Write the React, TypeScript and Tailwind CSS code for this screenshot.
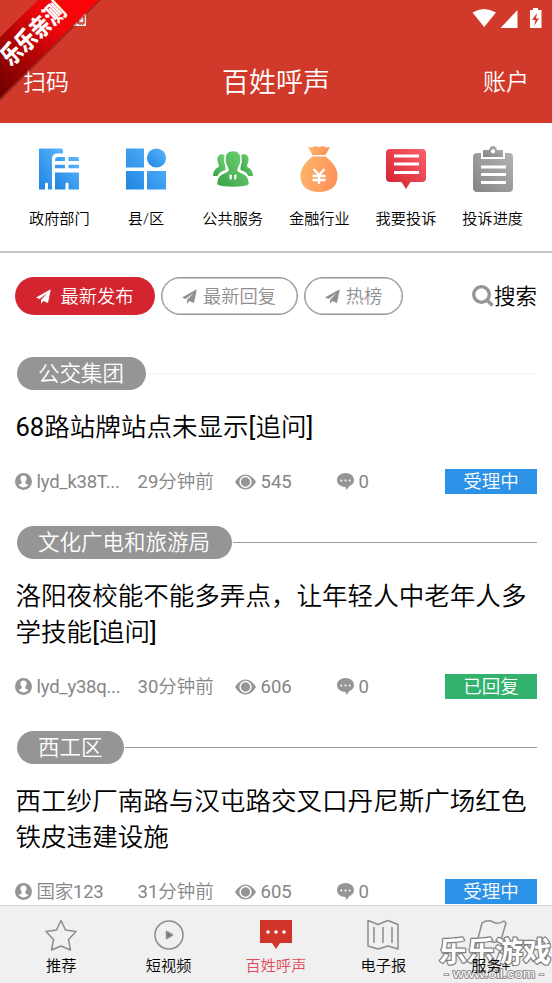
import React from 'react'

type Post = {
  id: number
  dept: string
  title: string
  user: string
  time: string
  views: number
  comments: number
  status: 'pending' | 'replied'
  faint?: boolean
}

const posts: Post[] = [
  { id: 1, dept: '公交集团', title: '68路站牌站点未显示[追问]', user: 'lyd_k38T...', time: '29分钟前', views: 545, comments: 0, status: 'pending', faint: true },
  { id: 2, dept: '文化广电和旅游局', title: '洛阳夜校能不能多弄点，让年轻人中老年人多学技能[追问]', user: 'lyd_y38q...', time: '30分钟前', views: 606, comments: 0, status: 'replied' },
  { id: 3, dept: '西工区', title: '西工纱厂南路与汉屯路交叉口丹尼斯广场红色铁皮违建设施', user: '国家123', time: '31分钟前', views: 605, comments: 0, status: 'pending' },
]

// Latin runs use the regular weight, Chinese keeps the lighter one
function MixedText({ text }: { text: string }) {
  return (
    <>
      {text.split(/([\x21-\x7e]+)/).map((part, i) =>
        i % 2 === 1 ? (
          <span key={i} className="font-normal">{part}</span>
        ) : (
          part
        )
      )}
    </>
  )
}

function Gradient({ id, from, to }: { id: string; from: string; to: string }) {
  return (
    <defs>
      <linearGradient id={id} x1="0" y1="1" x2="1" y2="0">
        <stop offset="0" stopColor={from} />
        <stop offset="1" stopColor={to} />
      </linearGradient>
    </defs>
  )
}

function BuildingIcon() {
  return (
    <svg className="size-12" viewBox="0 0 48 48">
      <Gradient id="building" from="#1f85e0" to="#5cb6ff" />
      <g fill="url(#building)">
        <path d="M5 3.500h21q2 0 2 2v3h-5.500q-5.500 0-5.500 5.500v30.500h-4v-5q0-2-1.500-2T10 39.500v5H4v-40q0-1 1-1z" />
        <path d="M20 16q0-4 3-4h7v4zM33.500 12H42q2 0 2 2v2H33.500zM20 19.700h10v3.500H20zM33.500 19.700H44v3.500H33.500zM20 27.500h24v17H33.500v-5q0-2-1.500-2t-1.500 2v5H20z" />
      </g>
    </svg>
  )
}

function DistrictIcon() {
  return (
    <svg className="size-12" viewBox="0 0 48 48">
      <Gradient id="district" from="#1f85e0" to="#5cb6ff" />
      <g fill="url(#district)">
        <path d="M4 3.500h18v19H4zM4 26h18v18.500H4zM25 26h19v18.500H25z" />
        <circle cx="34.500" cy="13" r="9.600" />
      </g>
    </svg>
  )
}

function PeopleIcon() {
  return (
    <svg className="size-12" viewBox="0 0 48 48">
      <Gradient id="people" from="#35a143" to="#76d57a" />
      <g fill="url(#people)">
        <path d="M16 10c-5-2-8 1-7.500 5 0 3 1.500 4 1.500 6-.5 1-1 1.500-2 2-2 1-4 4-4 8h4.500c2-4 5-5 8-6z" />
        <path d="M32 10c5-2 8 1 7.500 5 0 3-1.500 4-1.500 6 .5 1 1 1.500 2 2 2 1 4 4 4 8h-4.500c-2-4-5-5-8-6z" />
        <path stroke="#fff" strokeWidth="1.600" d="M24 5.500c-6 0-8.500 3.500-8 8.500 0 2-.5 3 .5 4.500.5 3 2.500 4 2.500 7-3 3-11.500 2-11.500 14 4 4 29 4 33 0 0-12-8.500-11-11.500-14 0-3 2-4 2.500-7 1-1.500.5-2.500.5-4.500.5-5-2-8.500-8-8.500z" />
      </g>
      <path d="M20.500 29.500l2.500.5-.5 4.500-1 .5-1-2zM27.500 29.500L25 30l.5 4.500 1 .5 1-2z" fill="#fff" />
    </svg>
  )
}

function MoneyIcon() {
  return (
    <svg className="size-12" viewBox="0 0 48 48">
      <defs>
        <linearGradient id="money" x1="0" x2="1" y1=".4" y2=".6">
          <stop offset="0" stopColor="#fab568" />
          <stop offset="1" stopColor="#ff9059" />
        </linearGradient>
      </defs>
      <g fill="url(#money)">
        <path d="M13 2l4 .5L20 1l4 1 4-1 3 1.500L35 2l-4.500 8h-13z" />
        <path d="M17.500 11.500h13C37 16.500 42.500 22.500 42.500 31c0 11-8 16-18.500 16S5.500 42 5.500 31c0-8.500 5.500-14.500 12-19.500z" />
      </g>
      <path d="M18.500 24l5.500 6 5.500-6M17.500 31h13M17.500 35h13M24 30v9" fill="none" stroke="#fff" strokeWidth="2.300" />
    </svg>
  )
}

function ComplaintIcon() {
  return (
    <svg className="size-12" viewBox="0 0 48 48">
      <Gradient id="complaint" from="#d11f2c" to="#fb626c" />
      <path fill="url(#complaint)" d="M8 4h32q4 0 4 4v25q0 4-4 4H28.500L24 44 19.500 37H8q-4 0-4-4V8q0-4 4-4z" />
      <path d="M12 11h25M12 19h25M12 27.500h25" stroke="#fff" strokeWidth="3" />
    </svg>
  )
}

function ProgressIcon() {
  return (
    <svg className="size-12" viewBox="0 0 48 48">
      <Gradient id="progress" from="#858585" to="#b2b2b2" />
      <g fill="url(#progress)">
        <path d="M8 8h4v6h24V8h4q4 0 4 4v31q0 4-4 4H8q-4 0-4-4V12q0-4 4-4z" />
        <path fillRule="evenodd" d="M14 5h6q1-4 4-4t4 4h6v7H14zM24 4.200a2.100 2.100 0 100 4.200 2.100 2.100 0 000-4.200z" />
      </g>
      <path d="M12 22h25M12 29.500h25M12 37.500h25" stroke="#fff" strokeWidth="2.800" />
    </svg>
  )
}

const categories = [
  { label: '政府部门', Icon: BuildingIcon },
  { label: '县/区', Icon: DistrictIcon },
  { label: '公共服务', Icon: PeopleIcon },
  { label: '金融行业', Icon: MoneyIcon },
  { label: '我要投诉', Icon: ComplaintIcon },
  { label: '投诉进度', Icon: ProgressIcon },
]

function PlaneIcon() {
  return (
    <svg className="size-[15px]" viewBox="0 0 15 15" fill="currentColor">
      <path d="M14.800.2L0 8.500l3.500 1.600L11.500 4 5 11v3.800L7.300 12l4.700 2z" />
    </svg>
  )
}

function PostItem({ post }: { post: Post }) {
  return (
    <article className="mb-[32px]">
      <div className="flex h-[32.500px] items-center pl-[1.500px]">
        <span className="flex h-full items-center rounded-full bg-[#959595] px-[21.500px] pt-px text-[21.500px] leading-none text-white">{post.dept}</span>
        <span className={`ml-px h-px flex-1 ${post.faint ? 'bg-[#f2f2f2]' : 'bg-[#9b9b9b]'}`} />
      </div>
      <h2 className="mt-[19.500px] pl-[0.500px] text-[25.550px] leading-[36px] text-black">
        <MixedText text={post.title} />
      </h2>
      <div className="mt-[24px] flex h-[25px] items-center text-[18.500px] leading-none text-[#868686]">
        <div className="flex w-[122.500px] items-center gap-[4.500px]">
          <svg className="size-[17px]" viewBox="0 0 17 17">
            <circle cx="8.500" cy="8.500" r="8.500" fill="#959595" />
            <path fill="#fff" d="M8.500 2.500c-2.500 0-3.500 1.700-3 4.200l1.300 2.600v1L3.500 12q2 2.400 5 2.400t5-2.400l-3.300-1.700v-1l1.300-2.600c.5-2.500-.5-4.200-3-4.200z" />
          </svg>
          <span className="pt-[2px] tracking-[-0.25px] whitespace-nowrap">
            <MixedText text={post.user} />
          </span>
        </div>
        <span className="w-[97px] pt-[2px]">
          <MixedText text={post.time} />
        </span>
        <div className="flex w-[102px] items-center gap-[5px]">
          <svg className="h-[16px] w-[21px]" viewBox="0 0 21 16">
            <path fill="#959595" d="M0 8Q4.500 .5 10.500 .5T21 8Q16.500 15.500 10.500 15.500T0 8z" />
            <circle cx="10.500" cy="8" r="5.400" fill="#959595" stroke="#fff" strokeWidth="1.500" />
          </svg>
          <span className="pt-[2px] font-normal">{post.views}</span>
        </div>
        <div className="flex items-center gap-[5px]">
          <svg className="h-[17px] w-[17px]" viewBox="0 0 17 17">
            <path fill="#959595" d="M8.500 0C3.800 0 0 3 0 7s3.500 7 8.500 7l1 3 3-4Q17 11 17 7.200C17 3 13.200 0 8.500 0z" />
            <path stroke="#fff" strokeWidth="2" strokeLinecap="round" d="M4.300 7.500h0M8.500 7.500h0M12.700 7.500h0" />
          </svg>
          <span className="pt-[2px] font-normal">{post.comments}</span>
        </div>
        <span className={`ml-auto flex h-full w-[92px] items-center justify-center pt-[2px] text-white ${post.status === 'replied' ? 'bg-[#33b26d]' : 'bg-[#2c92e7]'}`}>
          {post.status === 'replied' ? '已回复' : '受理中'}
        </span>
      </div>
    </article>
  )
}

const tabs = [
  {
    label: '推荐',
    icon: <path d="M16 1.500l4.500 9.500 10.500 1.500-7.500 8 2 10.500L16 27l-9.500 4 2-10.500-7.500-8L11.500 11z" />,
  },
  {
    label: '短视频',
    icon: (
      <>
        <circle cx="16" cy="16" r="14" />
        <path d="M13.500 12.500v7l6-3.500z" fill="#777" />
      </>
    ),
  },
  {
    label: '百姓呼声',
    active: true,
    icon: (
      <>
        <path d="M0 1h32v23H20l-4 6-4-6H0z" fill="#d13529" stroke="none" />
        <path d="M8 13h0M16 13h0M24 13h0" stroke="#fff" strokeWidth="3.600" />
      </>
    ),
  },
  {
    label: '电子报',
    icon: <path d="M1 1.500l10 4 10-4 10 4v24.500l-10-3-10 3-10-3zM7 8.500v15M16 8.500v15M25 8.500v15" />,
  },
  {
    label: '服务+',
    icon: <path d="M0 31L7 4q6-4 11-1t11-1l2 2-5 17q-6 4-11 1t-12 1" />,
  },
]

export default function App() {
  return (
    <div className="relative flex h-[983px] w-[552px] flex-col overflow-hidden bg-white font-[Roboto,'Noto_Sans_CJK_SC',sans-serif] font-[350]">
      <header className="flex h-[123px] shrink-0 flex-col bg-[#d13a2a] text-white">
        <div className="flex h-[40px] items-start pt-[8px] pr-[10px] pl-[72px]">
          <svg className="mt-[5px] size-[14px]" viewBox="0 0 14 14">
            <path fill="#eee" d="M0 0h14v13H0z" />
            <path fill="none" stroke="#d13a2a" strokeWidth="1.500" d="M6 3v7h6V3M8 10v2M10.500 10v2" />
          </svg>
          <svg className="ml-auto h-[20px] w-[70px]" viewBox="0 0 70 20" fill="#fff">
            <path d="M.5 4.500Q12 -2.500 24 4.500L12.200 19zM45.500 2v18h-17z" />
            <path fillRule="evenodd" d="M58 2h3V0h5v2h3.500v18H58zM65 5l-5 7h3.500L62 18l5-7.500h-3z" />
          </svg>
        </div>
        <div className="flex h-[83px] items-center justify-between px-[23px] pt-[3px] text-[23px]">
          <span className="w-[60px]">扫码</span>
          <h1 className="text-[27px]">百姓呼声</h1>
          <span className="w-[60px] text-right">账户</span>
        </div>
      </header>

      <nav className="grid h-[130px] shrink-0 grid-cols-6 border-b-2 border-[#c6c6c6] px-4 pt-[22px]">
        {categories.map(({ label, Icon }) => (
          <div key={label} className="flex flex-col items-center gap-[14.500px]">
            <Icon />
            <span className="text-[15.200px] leading-[22px] whitespace-nowrap text-black">{label}</span>
          </div>
        ))}
      </nav>

      <main className="min-h-0 flex-1 overflow-hidden px-[15px] pt-[24px]">
        <div className="mb-[42px] flex h-[38px] items-center gap-[6px] text-[18.300px] leading-none text-[#8f8f8f]">
          <button className="flex h-full w-[140px] items-center justify-center gap-[9px] rounded-full bg-[#d3242f] text-white">
            <PlaneIcon />
            <span className="pt-[2px]">最新发布</span>
          </button>
          <button className="flex h-full w-[137px] items-center justify-center gap-[6px] rounded-full border-[1.500px] border-[#959595] pr-px shadow-[inset_0_0_0_0.500px_#959595]">
            <PlaneIcon />
            <span className="pt-[2px]">最新回复</span>
          </button>
          <button className="flex h-full w-[99px] items-center justify-center gap-[6px] rounded-full border-[1.500px] border-[#959595] shadow-[inset_0_0_0_0.500px_#959595]">
            <PlaneIcon />
            <span className="pt-[2px]">热榜</span>
          </button>
          <div className="ml-auto flex items-center text-[21.500px] text-black">
            <svg className="size-[22px]" viewBox="0 0 22 22" fill="none" stroke="#959595">
              <circle cx="9.500" cy="9.500" r="7.800" strokeWidth="3.300" />
              <path d="M15 15l5.500 5.500" strokeWidth="3.600" />
            </svg>
            <span className="pt-[2px]">搜索</span>
          </div>
        </div>
        {posts.map((post) => (
          <PostItem key={post.id} post={post} />
        ))}
      </main>

      <footer className="grid h-[78px] shrink-0 grid-cols-5 border-t border-[#d8d8d8] bg-[#f0f0f0] px-[7.500px] pt-[13px]">
        {tabs.map((tab) => (
          <div key={tab.label} className="flex flex-col items-center gap-[4px]">
            <svg className="size-8" viewBox="0 0 32 32" fill="none" stroke="#8c8c8c" strokeWidth="1.500" strokeLinejoin="round" strokeLinecap="round">
              {tab.icon}
            </svg>
            <span className={`text-[15.200px] leading-[22px] ${tab.active ? 'text-[#e04a5d]' : 'text-black'} ${tab.label === '服务+' ? 'relative z-10' : ''}`}>{tab.label}</span>
          </div>
        ))}
      </footer>

      {/* Corner ribbon */}
      <svg className="absolute top-0 left-0 size-[104px]" viewBox="0 0 104 104">
        <defs>
          <linearGradient id="ribbon" x1="0" y1="1" x2="1" y2="0">
            <stop offset="0" stopColor="#6b0000" />
            <stop offset=".35" stopColor="#ad0505" />
            <stop offset=".65" stopColor="#ee070b" />
            <stop offset="1" stopColor="#ff0508" />
          </linearGradient>
        </defs>
        <path d="M101 0L0 101V94L94 0z" fill="#561010" opacity=".45" />
        <path d="M38 0H99L0 98V37z" fill="url(#ribbon)" />
        <text transform="translate(33.500 34) rotate(-43.500) scale(.87 1.080)" textAnchor="middle" dominantBaseline="central" fontSize="22.500" fontWeight="900" fill="#fff">乐乐亲测</text>
      </svg>

      {/* Site watermark */}
      <svg className="absolute right-0 bottom-0 h-[50px] w-[116px]" viewBox="0 0 116 50" fill="#fff" stroke="#808080" paintOrder="stroke" strokeLinejoin="round">
        <text x="3" y="29" fontSize="28" fontWeight="700" strokeWidth="2.500" textLength="112" lengthAdjust="spacingAndGlyphs">乐乐游戏</text>
        <text x="8" y="45" fontSize="12" fontFamily="Liberation Sans" strokeWidth="1.800" opacity=".85" textLength="100" lengthAdjust="spacingAndGlyphs">- www.6ll.com -</text>
      </svg>
    </div>
  )
}
